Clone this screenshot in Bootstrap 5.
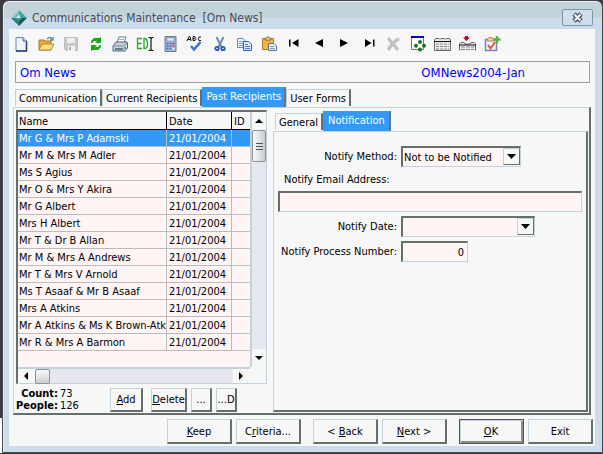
<!DOCTYPE html>
<html lang="en">
<head>
<meta charset="utf-8">
<meta name="viewport" content="width=device-width, initial-scale=1">
<title>Communications Maintenance [Om News]</title>
<link href="https://cdn.jsdelivr.net/npm/bootstrap@5.3.0/dist/css/bootstrap.min.css" rel="stylesheet">
<script src="https://cdn.jsdelivr.net/npm/bootstrap@5.3.0/dist/js/bootstrap.bundle.min.js" defer></script>
<style>
:root { --face:#f7f7f7; --lite:#c3d3dc; --dark:#65706a; --hot:#3399f8; --field:#fff5f5; --frame:#cddcec; }
body { font:11px/14px "DejaVu Sans Condensed","DejaVu Sans",sans-serif; color:#000; background:linear-gradient(#3c3c3e 418px,#fff 418px); }
button, input, select { font:inherit; color:inherit; border-radius:0; }
.win { border:1px solid #45474c; border-radius:7px 7px 0 0; margin-left:2px; padding:0 7px 6px 6px; background:linear-gradient(#c3d3da 17px,var(--frame) 17px); box-shadow:inset 1px 1px 0 #e6eef5; }
.titlebar { height:28px; padding:0 2px 0 1px; }
.titlebar h1 { font-size:12px; line-height:16px; color:#474b52; white-space:nowrap; padding-top:9px; }
.close-btn { width:31px; height:17px; margin-top:8px; border:1px solid #8295a8; border-radius:2px; background:#cfdfed; }
.client { background:var(--face); }
.tools { display:grid; grid-template-columns:repeat(20,1fr); max-width:496px; padding-top:7px; }
.tools button, .plain { border:0; background:none; padding:0; line-height:0; }
.ident { border:1px solid #9a9f96; margin:9px 5px 0 6px; height:22px; padding:0 64px 0 4px; font-size:13px; line-height:22px; color:#00f; }
.tabs { padding-left:2px; height:20px; align-items:flex-end; }
.tabs button { border:1px solid var(--lite); border-right:2px solid var(--dark); border-bottom:0; background:var(--face); height:17px; padding:0 3px; line-height:17px; margin-bottom:1px; white-space:nowrap; }
.tabs .on { background:var(--hot); color:#fff; height:20px; border-color:var(--hot); border-right-color:#5c7a86; margin-bottom:0; padding-bottom:3px; }
.tabs-sub .on { padding:0 4px 3px; }
.pane { border:1px solid var(--lite); border-right:2px solid var(--dark); border-bottom:2px solid var(--dark); }
.outer { margin:0 4px; padding:2px 1px 1px 2px; }
.listbox { width:251px; border:1px solid var(--lite); border-top:2px solid var(--dark); border-left:2px solid var(--dark); background:var(--face); }
.rows { width:232px; background:var(--field); height:255px; overflow:hidden; }
.rows table { table-layout:fixed; width:100%; border-collapse:separate; border-spacing:0; }
.rows th, .rows td { height:17px; padding:2px 0 0 1px; line-height:14px; font-weight:400; overflow:hidden; white-space:nowrap; border-right:1px solid #bcbcbc; border-bottom:1px solid #bcbcbc; }
.rows th { background:var(--face); border-color:#000; height:18px; }
.rows tr > :last-child { border-right:0; }
.rows td + td, .rows th + th { padding-left:2px; }
.rows .sel td { background:var(--hot); color:#fff; }
.c-name { width:149px; } .c-date { width:65px; }
.vbar { width:16px; background:#e6e8f0; border-left:2px solid var(--lite); }
.hbar { height:16px; background:#e6e8f0; border-top:2px solid var(--lite); }
.vbar .plain, .hbar .plain { background:var(--face); }
.vbar .plain { height:18px; }
.hbar .plain { width:17px; }
.thumb { border:1px solid #8c8f94; border-radius:2px; background:linear-gradient(90deg,#fafafa,#c9ccd2); }
.vbar .thumb { height:32px; }
.hbar .thumb { width:15px; height:15px; background:linear-gradient(#fafafa,#cdd0d4); }
.counts { display:grid; grid-template-columns:42px auto; grid-auto-rows:12px; column-gap:2px; line-height:12px; width:94px; }
.counts b { text-align:right; }
.push { border:1px solid var(--lite); border-right:2px solid var(--dark); border-bottom:2px solid var(--dark); background:var(--face); height:24px; padding:0; line-height:20px; white-space:nowrap; }
.w-add { width:33px; } .w-del { width:36px; } .w-dot { width:21px; }
.cmd { width:65px; height:25px; padding-top:1px; }
.cmd.main { border:1px solid #56525e; padding-right:1px; box-shadow:inset 1px 1px 0 var(--lite), inset -2px -2px 0 #87918a; }
.cmdbar { padding:4px 2px 2px; }
.gap-group { margin-left:12px; }
.detail { padding-left:6px; padding-top:1px; }
.fields { display:grid; grid-template-columns:119px 1fr; column-gap:4px; row-gap:4px; padding:14px 4px 0 4px; align-content:start; align-items:center; }
.fields label { text-align:right; white-space:nowrap; }
.fields .wide { grid-column:1 / -1; text-align:left; }
.fields label.wide { padding:2px 0 0 6px; }
.field { display:block; height:21px; background:var(--field); border:1px solid var(--lite); border-top:2px solid var(--dark); border-left:2px solid var(--dark); padding:0 3px 0 1px; appearance:none; width:100%; line-height:17px; }
.combo { position:relative; }
.combo .arrow { position:absolute; right:1px; top:2px; width:17px; height:17px; pointer-events:none; background:var(--face); border:1px solid var(--lite); border-right-color:var(--dark); border-bottom-color:var(--dark); line-height:0; }
.w-method { width:120px; } .w-dt { width:134px; } .w-num { width:67px; text-align:right; }
</style>
</head>
<body>
<main class="win">
  <header class="titlebar d-flex align-items-start">
    <svg class="mt-2 me-1" width="18" height="18" viewBox="0 0 18 18"><path d="M9 1L17 9H9z" fill="#3ca6a1"/><path d="M9 1L1 9H9z" fill="#86c9c6"/><path d="M1 9L9 17V9z" fill="#2f827f"/><path d="M17 9L9 17V9z" fill="#16595a"/><path d="M9 4L13 8 9 12 5 8z" fill="#4e9d9b"/><path d="M9 5L10.500 9H5.500z" fill="#c9ecea"/></svg>
    <h1 class="m-0 fw-normal flex-grow-1">Communications Maintenance &nbsp;[Om News]</h1>
    <button class="close-btn p-0 d-flex align-items-center justify-content-center" aria-label="Close"><svg width="13" height="11" viewBox="0 0 13 11"><path d="M3 2L10 9M10 2L3 9" stroke="#4f565f" stroke-width="4.600"/><path d="M3.500 2.500L9.500 8.500M9.500 2.500L3.500 8.500" stroke="#fff" stroke-width="2"/></svg></button>
  </header>
  <div class="client">
    <div class="tools" role="toolbar" aria-label="Main">
      <button aria-label="New"><svg width="16" height="16"><path d="M3 1.500H10L13.500 5V15H3z" fill="#eef4fc" stroke="#7083a5"/><path d="M13.500 5V15H3" fill="none" stroke="#293f69" stroke-width="1.500"/><path d="M10 1.500V5H13.500" fill="#b8cae4" stroke="#536b94"/></svg></button>
      <button aria-label="Open"><svg width="17" height="16"><path d="M1 4H6L7 5H13V14H1z" fill="#e5ac33" stroke="#a97a23"/><path d="M4 8H16L13 14H1z" fill="#ffdf83" stroke="#b58a32"/><path d="M9 3Q12 0 14 3M15 1V4H12" fill="none" stroke="#5f83ac" stroke-width="1.300"/></svg></button>
      <button aria-label="Save"><svg width="16" height="16"><path d="M1.500 1.500H14.500V14.500H3L1.500 13z" fill="#c6c8ca" stroke="#bcbec0"/><path d="M4 2H12V7H4z" fill="#eceeee"/><path d="M5 10H12V15H5z" fill="#f5f5f5"/><path d="M6 11H8V14H6z" fill="#aaa"/></svg></button>
      <button aria-label="Refresh"><svg width="16" height="16"><path d="M3 7V5L6 2H11L13 1V7H7L9 5H6L4 7z" fill="#15a61b"/><path d="M13 9V11L10 14H5L3 15V9H9L7 11H10L12 9z" fill="#15a61b"/></svg></button>
      <button aria-label="Print"><svg width="17" height="16"><path d="M5 7L7 1H14L12 7z" fill="#fff" stroke="#6c7d96"/><path d="M1 10L4 6H15L15.500 8V12L13 15H1z" fill="#c9d0da" stroke="#53627a"/><path d="M1 10H12L15 7" fill="none" stroke="#7d8ca2"/><path d="M7 3.500H12M6.500 5.500H11" stroke="#9bafc9"/><path d="M3 13H11" stroke="#4b596f" stroke-width="1.500"/><path d="M12 11H14V13H12z" fill="#33ba38"/></svg></button>
      <button aria-label="Edit text"><svg width="18" height="16"><path d="M6 2.500H1.500V12.500H6M1.500 7.500H5.500M8 2.500V12.500H9Q11.500 12 11.500 7.500T9 2.500z" fill="none" stroke="#22ad26" stroke-width="1.300"/><path d="M12.500 1.500H14L15 2.500 16 1.500H17.500M15 2V14M12.500 14.500H14L15 13.500 16 14.500H17.500" fill="none" stroke="#111" stroke-width="1.200"/></svg></button>
      <button aria-label="Calculator"><svg width="16" height="16"><path d="M3 .5H14V15.500H3z" fill="#a6b7d2" stroke="#667b9c"/><path d="M5 2H12V5H5z" fill="#e3f1fa" stroke="#587096" stroke-width=".5"/><path d="M4.500 7.500H6.500M4.500 10H6.500M4.500 12.500H6.500M7.500 7.500H9.500M7.500 10H9.500M7.500 12.500H9.500" stroke="#4468c9" stroke-width="1.500"/><path d="M10.500 7.500H12.500M10.500 10H12.500" stroke="#d43f43" stroke-width="1.500"/><path d="M10.500 12.500H12.500" stroke="#fff" stroke-width="1.500"/></svg></button>
      <button aria-label="Spelling"><svg width="18" height="16"><path d="M1 5L3 .7H4L5 5M2 3.500H5M7 .7V4.500H9Q10.500 3.500 9 2.700Q10.500 1 9 .7zM7 2.700H9M15 1H13Q11.500 2.700 13 4.500H15" fill="none" stroke="#111"/><path d="M5 10L8 13.500 14.500 6" fill="none" stroke="#3e74d8" stroke-width="2.600"/></svg></button>
      <button aria-label="Cut"><svg width="16" height="16"><path d="M4.500 1L9.500 11M11.500 1L6.500 11" stroke="#6f87aa" stroke-width="1.900"/><circle cx="5" cy="12.500" r="1.700" fill="none" stroke="#2858b8" stroke-width="1.800"/><circle cx="11" cy="12.500" r="1.700" fill="none" stroke="#2858b8" stroke-width="1.800"/></svg></button>
      <button aria-label="Copy"><svg width="17" height="16"><path d="M1.500 2.500H7L9.500 5V11.500H1.500z" fill="#e8f2ff" stroke="#688abe"/><path d="M3 5.500H7M3 7.500H7M3 9.500H7" stroke="#7ba0d8"/><path d="M7.500 5.500H12.500L15.500 8V14.500H7.500z" fill="#dbeaff" stroke="#2d5eb8"/><path d="M9 8.500H12M9 10.500H14M9 12.500H14" stroke="#4b7dd0"/></svg></button>
      <button aria-label="Paste"><svg width="17" height="16"><path d="M1.500 2.500H12.500V13.500H1.500z" fill="#efb641" stroke="#b47c22"/><path d="M4 4V2H6L7 .5 8 2H10V4z" fill="#f6e4b7" stroke="#80683f"/><path d="M7.500 7.500H13L15.500 10V14.500H7.500z" fill="#e5edf8" stroke="#5d6f8c"/><path d="M9 10.500H13M9 12.500H14" stroke="#8098bd"/></svg></button>
      <button aria-label="First"><svg width="16" height="16"><path d="M3 3.500H4.500V10.500H3zM12.500 3V11L6 7z"/></svg></button>
      <button aria-label="Previous"><svg width="16" height="16"><path d="M12 3V11L4 7z"/></svg></button>
      <button aria-label="Next"><svg width="16" height="16"><path d="M4 3V11L12 7z"/></svg></button>
      <button aria-label="Last"><svg width="16" height="16"><path d="M12 3.500H13.500V10.500H12zM4 3V11L10.500 7z"/></svg></button>
      <button aria-label="Delete record"><svg width="16" height="16"><path d="M3 2L13 14M14 2.500Q8 6 3 14" fill="none" stroke="#c2c2c2" stroke-width="3.400"/></svg></button>
      <button aria-label="Network"><svg width="17" height="16"><path d="M1.500 1.500H13.500V13.500H1.500z" fill="#fff" stroke="#777"/><path d="M1 1H14" stroke="#00c" stroke-width="2"/><g fill="#15741b"><circle cx="10" cy="6" r="2"/><circle cx="6" cy="9.800" r="2"/><circle cx="14" cy="9.800" r="2"/><circle cx="10" cy="13.500" r="2"/></g></svg></button>
      <button aria-label="Records"><svg width="17" height="16"><path d="M.5 14.500V3.500L2 2.500H5L6 3.500 7 2.500H10L11 3.500 12 2.500H15L16.500 3.500V14.500z" fill="#ececea" stroke="#666"/><path d="M0 5.500H17" stroke="#111"/><path d="M2 8H15M2 10.500H15M2 13H15" stroke="#888" stroke-dasharray="3 1"/></svg></button>
      <button aria-label="Insert record"><svg width="17" height="16"><path d="M6 0H9V1.500H11L7.500 5 4 1.500H6z" fill="#c80015"/><path d="M.5 14.500V8L2 6.500H5L6 8H11L12 6.500H15L16.500 8V14.500" fill="#ececea" stroke="#666"/><path d="M0 9H17" stroke="#111"/><path d="M2 11H15M2 13.500H15" stroke="#888" stroke-dasharray="4 1"/></svg></button>
      <button aria-label="Add task"><svg width="17" height="16"><path d="M1.500 3.500H12.500V14.500H1.500z" fill="#eef4ff" stroke="#7188b6" stroke-width="1.500"/><path d="M3.500 5V3L5 1.500H8L10 4V5z" fill="#f6ce91" stroke="#bd8847"/><path d="M4 9L6.500 12.500 11 6" fill="none" stroke="#e65536" stroke-width="2"/><path d="M13 0V7M9.500 3.500H16.500" stroke="#55ad51" stroke-width="2.400"/></svg></button>
    </div>
    <div class="ident d-flex justify-content-between"><span>Om News</span><span>OMNews2004-Jan</span></div>
    <nav class="tabs d-flex mt-1 ms-1">
      <button>Communication</button><button>Current Recipients</button><button class="on">Past Recipients</button><button>User Forms</button>
    </nav>
    <section class="pane outer d-flex">
      <div class="flex-shrink-0">
        <div class="listbox">
          <div class="d-flex">
            <div class="rows">
              <table>
                <thead><tr><th class="c-name">Name</th><th class="c-date">Date</th><th>ID</th></tr></thead>
                <tbody>
                  <tr class="sel"><td>Mr G &amp; Mrs P Adamski</td><td>21/01/2004</td><td></td></tr>
                  <tr><td>Mr M &amp; Mrs M Adler</td><td>21/01/2004</td><td></td></tr>
                  <tr><td>Ms S Agius</td><td>21/01/2004</td><td></td></tr>
                  <tr><td>Mr O &amp; Mrs Y Akira</td><td>21/01/2004</td><td></td></tr>
                  <tr><td>Mr G Albert</td><td>21/01/2004</td><td></td></tr>
                  <tr><td>Mrs H Albert</td><td>21/01/2004</td><td></td></tr>
                  <tr><td>Mr T &amp; Dr B Allan</td><td>21/01/2004</td><td></td></tr>
                  <tr><td>Mr M &amp; Mrs A Andrews</td><td>21/01/2004</td><td></td></tr>
                  <tr><td>Mr T &amp; Mrs V Arnold</td><td>21/01/2004</td><td></td></tr>
                  <tr><td>Ms T Asaaf &amp; Mr B Asaaf</td><td>21/01/2004</td><td></td></tr>
                  <tr><td>Mrs A Atkins</td><td>21/01/2004</td><td></td></tr>
                  <tr><td>Mr A Atkins &amp; Ms K Brown-Atkin</td><td>21/01/2004</td><td></td></tr>
                  <tr><td>Mr R &amp; Mrs A Barmon</td><td>21/01/2004</td><td></td></tr>
                </tbody>
              </table>
            </div>
            <div class="vbar d-flex flex-column">
              <button class="plain" aria-label="Scroll up"><svg width="8" height="5"><path d="M4 0L8 4H0z"/></svg></button>
              <div class="thumb d-flex align-items-center justify-content-center"><svg width="7" height="9"><path d="M0 1.500H7M0 4.500H7M0 7.500H7" stroke="#555"/></svg></div>
              <button class="plain mt-auto" aria-label="Scroll down"><svg width="8" height="5"><path d="M4 4L8 0H0z"/></svg></button>
            </div>
          </div>
          <div class="hbar d-flex me-3">
            <button class="plain" aria-label="Scroll left"><svg width="5" height="8"><path d="M0 4L4 0V8z"/></svg></button>
            <div class="thumb"></div>
            <button class="plain ms-auto" aria-label="Scroll right"><svg width="5" height="8"><path d="M4 4L0 0V8z"/></svg></button>
          </div>
        </div>
        <div class="d-flex pt-1">
          <div class="counts"><b>Count:</b><span>73</span><b>People:</b><span>126</span></div>
          <button class="push w-add me-2"><u>A</u>dd</button>
          <button class="push w-del me-1"><u>D</u>elete</button>
          <button class="push w-dot me-1">...</button>
          <button class="push w-dot">...D</button>
        </div>
      </div>
      <div class="detail flex-grow-1 d-flex flex-column">
        <nav class="tabs tabs-sub d-flex"><button>General</button><button class="on">Notification</button></nav>
        <form class="pane fields flex-grow-1">
          <label for="method">Notify Method:</label>
          <div class="combo w-method"><select id="method" class="field"><option>Not to be Notified</option></select><span class="arrow d-flex align-items-center justify-content-center"><svg width="9" height="5"><path d="M0 0H9L4.500 5z"/></svg></span></div>
          <label class="wide" for="email">Notify Email Address:</label>
          <input class="field wide" id="email" type="text">
          <label for="ndate">Notify Date:</label>
          <div class="combo w-dt"><select id="ndate" class="field"><option></option></select><span class="arrow d-flex align-items-center justify-content-center"><svg width="9" height="5"><path d="M0 0H9L4.500 5z"/></svg></span></div>
          <label for="proc">Notify Process Number:</label>
          <input class="field w-num" id="proc" type="text" value="0">
        </form>
      </div>
    </section>
    <footer class="cmdbar d-flex justify-content-end">
      <button class="push cmd"><u>K</u>eep</button>
      <button class="push cmd ms-1">C<u>r</u>iteria...</button>
      <button class="push cmd gap-group">&lt; <u>B</u>ack</button>
      <button class="push cmd ms-1"><u>N</u>ext &gt;</button>
      <button class="push cmd main gap-group"><u>O</u>K</button>
      <button class="push cmd ms-1">Exit</button>
    </footer>
  </div>
</main>
</body>
</html>
